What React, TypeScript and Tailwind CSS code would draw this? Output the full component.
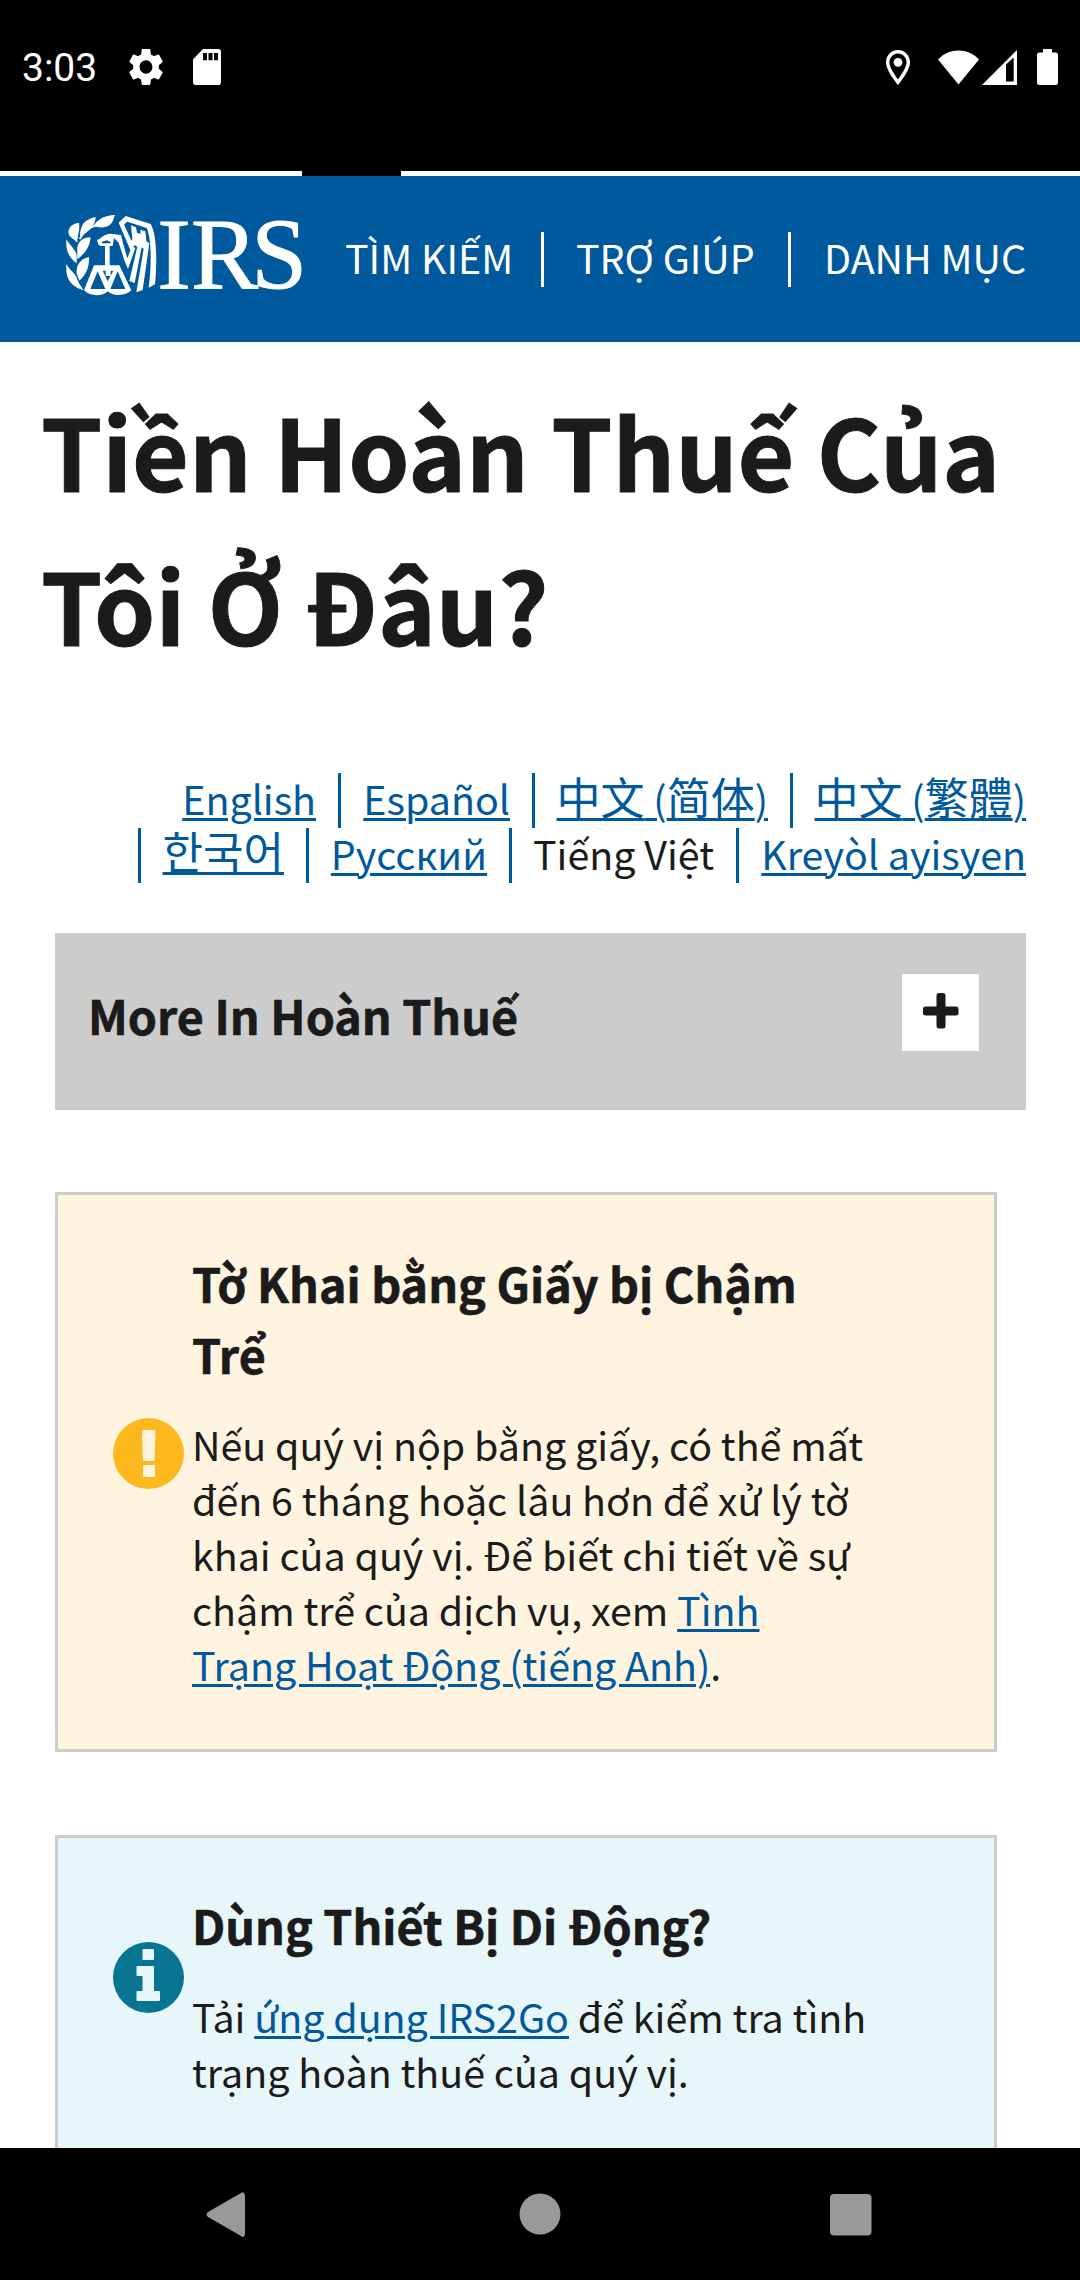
import type { ReactNode } from "react";

const sans = "font-['Noto_Sans_CJK_SC','Noto_Sans',sans-serif]";

function StatusBar() {
  return (
    <div className="flex h-[171px] items-start justify-between bg-black text-white">
      <div className="flex h-[134px] items-center pl-[22px] font-[Roboto,sans-serif] text-[39px] leading-none">
        <span className="w-[107px] pt-[3px]">3:03</span>
        <svg className="h-[36px] w-[34px]" viewBox="2.5 2.4 19 19.2" preserveAspectRatio="none" fill="currentColor">
          <path d="M19.14 12.94c.04-.3.06-.61.06-.94 0-.32-.02-.64-.07-.94l2.03-1.58a.49.49 0 0 0 .12-.61l-1.92-3.32a.488.488 0 0 0-.59-.22l-2.39.96c-.5-.38-1.03-.7-1.62-.94L14.4 2.81a.484.484 0 0 0-.48-.41h-3.84c-.24 0-.43.17-.47.41L9.25 5.35c-.59.24-1.13.57-1.62.94L5.24 5.33a.48.48 0 0 0-.59.22L2.74 8.87c-.12.21-.08.47.12.61l2.03 1.58c-.05.3-.09.63-.09.94s.02.64.07.94l-2.03 1.58a.49.49 0 0 0-.12.61l1.92 3.32c.12.22.37.29.59.22l2.39-.96c.5.38 1.03.7 1.62.94l.36 2.54c.05.24.24.41.48.41h3.84c.24 0 .44-.17.47-.41l.36-2.54c.59-.24 1.13-.56 1.62-.94l2.39.96c.22.08.47 0 .59-.22l1.92-3.32a.48.48 0 0 0-.12-.61l-2.01-1.58zM12 15.6A3.61 3.61 0 0 1 8.4 12c0-1.98 1.62-3.6 3.6-3.6s3.6 1.62 3.6 3.6-1.62 3.600-3.600 3.600z" />
        </svg>
        <svg className="ml-[30px] h-[36px] w-[28px]" viewBox="0 0 28 35" preserveAspectRatio="none" fill="currentColor">
          <path fillRule="evenodd" d="M10 0H25Q28 0 28 3V32Q28 35 25 35H3Q0 35 0 32V10ZM10 4V11H14V4ZM15.500 4V11H19.500V4ZM21 4V11H25V4Z" />
        </svg>
      </div>
      <svg className="mt-[49px] mr-[22px] h-[36px] w-[172px]" viewBox="886 49 172 36" fill="currentColor">
        <path fillRule="evenodd" d="M898 50C891 50 886 55.500 886 62.500C886 71 898 85 898 85S910 71 910 62.500C910 55.500 905 50 898 50ZM898 53.500C903 53.500 906.600 57.500 906.600 62.500C906.600 68 898 79.500 898 79.500S889.400 68 889.400 62.500C889.400 57.500 893 53.500 898 53.500Z" />
        <circle cx="898" cy="62.300" r="4.400" />
        <path d="M938 59.500C949 47.500 968 47.500 979 59.500L958.500 84.500Z" />
        <path fillRule="evenodd" d="M982 85L1017 50V85ZM1006 64.500V81.500H1013.700V57.500Z" />
        <path d="M1043 49H1052V52.500H1055.500Q1058 52.500 1058 55V82.500Q1058 85 1055.500 85H1039.500Q1037 85 1037 82.500V55Q1037 52.500 1039.500 52.500H1043Z" />
      </svg>
    </div>
  );
}

function Logo() {
  return (
    <svg className="h-[130px] w-[300px]" viewBox="0 0 900 390" fill="white">
      {/* laurel branch */}
      <path d="M225 75C195 76 172 88 160 108C180 116 200 112 210 104C219 97 221 85 225 75Z" />
      <path d="M119 147C130 125 145 113 168 106" fill="none" stroke="white" strokeWidth="6" />
      <path d="M167 81C140 86 120 100 120 138C150 124 166 105 167 81Z" />
      <path d="M117 98C95 100 83 115 86 132C90 142 100 146 112 158C112 135 121 120 117 98Z" />
      <path d="M152 142C128 142 115 155 112 172L112 208C135 190 150 170 152 142Z" />
      <path d="M79 148C78 178 80 196 110 220C110 200 112 190 104 182C98 170 85 160 79 148Z" />
      <path d="M147 201C120 208 108 225 110 250L118 272C140 252 148 230 147 201Z" />
      <path d="M79 222C77 260 85 285 130 301C122 285 112 275 110 262C100 245 85 235 79 222Z" />
      {/* eagle head and neck */}
      <path fillRule="evenodd" d="M171 150C184 146 190 132 212 131L243 135L249 160L262 205L276 168L286 174L264 237L254 214L236 158L222 144L218 168H184L176 165ZM186 155L200 151L212 156V160H186Z" />
      {/* scales */}
      <path fillRule="evenodd" d="M195 166H209V226H238L274 301C258 318 218 320 203 304C188 320 150 320 132 301L162 226H195ZM173 244L151 297H196ZM233 244L211 297H256ZM188 242L203 274L220 242H212V258H197V242Z" />
      {/* wing */}
      <path d="M236 98L257 78L332 102C350 130 352 215 345 283L326 293C334 235 336 150 320 114L262 95L252 103L280 166L272 182Z" />
      <path d="M273 106L288 112L291 128L302 132L301 119L316 124L319 154L328 160L308 300L289 307L311 176L305 172L284 279L268 273L292 170L284 166L278 172L268 160L277 148Z" />
      <text className="font-['Liberation_Serif',serif] text-[302px]" x="352 453 634" y="296" stroke="white" strokeWidth="3">IRS</text>
    </svg>
  );
}

function Header() {
  return (
    <header className="flex h-[166px] bg-[#00599c] text-[39.4px] leading-[49px] text-white">
      <div className="mt-[14px] ml-[40px] w-[300px] shrink-0">
        <Logo />
      </div>
      <nav className="mt-[56px] flex h-[55px] whitespace-nowrap">
        <span className="w-[201px] pl-[5px]">TÌM KIẾM</span>
        <span className="w-[247px] border-l-3 border-white pl-[32px]">TRỢ GIÚP</span>
        <span className="border-l-3 border-white pl-[33px]">DANH MỤC</span>
      </nav>
    </header>
  );
}

const linkStyle =
  "text-[#00599c] underline decoration-[3px] underline-offset-[3px]";

function Lang({ width, children, first }: { width: string; children: ReactNode; first?: boolean }) {
  return (
    <li className={`flex h-[55px] shrink-0 ${width} ${first ? "" : "border-l-3 border-[#00599c]"} justify-end`}>
      {children}
    </li>
  );
}

function Languages() {
  return (
    <div className="h-[110px] pr-[54px] text-[39.4px] leading-[49px] whitespace-nowrap">
      <ul className="flex justify-end">
        <Lang first width="w-[156px] pr-[22px]"><a className={linkStyle}>English</a></Lang>
        <Lang width="w-[194px] pr-[22px]"><a className={linkStyle}>Español</a></Lang>
        <Lang width="w-[258px] pr-[22px]"><a className={linkStyle}><span className="text-[44px] leading-[44px]">中文</span> (<span className="text-[44px] leading-[44px]">简体</span>)</a></Lang>
        <Lang width="w-[236px]"><a className={linkStyle}><span className="text-[44px] leading-[44px]">中文</span> (<span className="font-['Noto_Sans_CJK_TC',sans-serif] text-[44px] leading-[44px]">繁體</span>)</a></Lang>
      </ul>
      <ul className="flex justify-end">
        <Lang width="w-[168px] pr-[22px]"><a className={`${linkStyle} font-['Noto_Sans_CJK_KR',sans-serif] text-[44px] leading-[45px]`}>한국어</a></Lang>
        <Lang width="w-[203px] pr-[22px]"><a className={linkStyle}>Русский</a></Lang>
        <Lang width="w-[227px] pr-[22px]"><span>Tiếng Việt</span></Lang>
        <Lang width="w-[290px]"><a className={linkStyle}>Kreyòl ayisyen</a></Lang>
      </ul>
    </div>
  );
}

function NavBar() {
  return (
    <div className="flex h-[132px] shrink-0 bg-black">
      <svg className="h-[132px] w-full" viewBox="0 0 1080 132" fill="#999">
        <path d="M245 47V86Q244 91 241 88L208 69Q205 66.500 208 64L241 45Q244 43 245 47Z" />
        <circle cx="540" cy="66" r="20.500" />
        <rect x="830" y="46" width="41.500" height="41.500" rx="4" />
      </svg>
    </div>
  );
}

export default function App() {
  return (
    <div className={`flex h-[2280px] w-[1080px] flex-col overflow-hidden bg-white text-[#1b1b1b] ${sans}`}>
      <StatusBar />
      <div className="flex h-[5px] bg-white pl-[302px]">
        <div className="w-[99px] bg-black" />
      </div>
      <Header />
      <main className="h-[1806px] overflow-hidden">
        <h1 className="mt-[30px] h-[308px] pl-[41px] text-[98px] leading-[154px] font-bold whitespace-nowrap [-webkit-text-stroke:1px_#1b1b1b]">
          Tiền Hoàn Thuế Của
          <br />
          Tôi Ở Đâu?
        </h1>
        <div className="mt-[93px]">
          <Languages />
        </div>
        <div className="mt-[50px] ml-[55px] flex h-[177px] w-[971px] justify-between bg-[#ccc] pt-[41px] pr-[47px] pl-[33px]">
          <span className="mt-[5px] text-[46.65px] leading-[71px] font-bold [-webkit-text-stroke:0.6px_#1b1b1b]">More In Hoàn Thuế</span>
          <button className="flex h-[77px] w-[77px] justify-center bg-white pt-[19px]">
            <svg className="h-[36px] w-[36px]" viewBox="0 0 36 36" fill="#1b1b1b">
              <path d="M16 0H20Q22.500 0 22.500 2.500V13.500H33Q35.500 13.500 35.500 16V20Q35.500 22.500 33 22.500H22.500V33Q22.500 35.500 20 35.500H16Q13.500 35.500 13.500 33V22.500H2.500Q0 22.500 0 20V16Q0 13.500 2.500 13.500H13.500V2.500Q13.500 0 16 0Z" />
            </svg>
          </button>
        </div>

        <section className="mt-[82px] ml-[55px] flex h-[560px] w-[942px] border-3 border-[#ccc] bg-[#fff4df]">
          <svg className="mt-[223px] ml-[55px] h-[71px] w-[71px] shrink-0" viewBox="0 0 71 71">
            <circle cx="35.500" cy="35.500" r="35.500" fill="#fdb81e" />
            <path d="M30 12H41.500Q42.500 12 42.500 13L41.500 42Q41.500 43 40.500 43H31Q30 43 30 42L29 13Q29 12 30 12ZM31 47H41Q42 47 42 48V58Q42 59 41 59H31Q30 59 30 58V48Q30 47 31 47Z" fill="#fff4df" />
          </svg>
          <div className="ml-[8px] whitespace-nowrap">
            <h3 className="mt-[52px] text-[46.65px] leading-[71px] font-bold [-webkit-text-stroke:0.6px_#1b1b1b]">Tờ Khai bằng Giấy bị Chậm<br />Trể</h3>
            <p className="mt-[27px] text-[39.4px] leading-[55px]">
              Nếu quý vị nộp bằng giấy, có thể mất<br />
              đến 6 tháng hoặc lâu hơn để xử lý tờ<br />
              khai của quý vị. Để biết chi tiết về sự<br />
              chậm trể của dịch vụ, xem <a className={linkStyle}>Tình<br />Trạng Hoạt Động (tiếng Anh)</a>.
            </p>
          </div>
        </section>

        <section className="mt-[83px] ml-[55px] flex h-[400px] w-[942px] border-3 border-[#ccc] bg-[#e7f6f9]">
          <svg className="mt-[104px] ml-[55px] h-[71px] w-[71px] shrink-0" viewBox="0 0 71 71">
            <circle cx="35.500" cy="35.500" r="35.500" fill="#087592" />
            <path d="M30.500 7H40Q41 7 41 8V17Q41 18 40 18H30.500Q29.500 18 29.500 17V8Q29.500 7 30.500 7ZM24.500 24H40Q41 24 41 25V49H46Q47 49 47 50V58Q47 59 46 59H24.500Q23.500 59 23.500 58V50Q23.500 49 24.500 49H29.500V34H24.500Q23.500 34 23.500 33V25Q23.500 24 24.500 24Z" fill="#e7f6f9" />
          </svg>
          <div className="ml-[8px] whitespace-nowrap">
            <h3 className="mt-[51px] text-[46.65px] leading-[71px] font-bold [-webkit-text-stroke:0.6px_#1b1b1b]">Dùng Thiết Bị Di Động?</h3>
            <p className="mt-[28px] text-[39.4px] leading-[55px]">
              Tải <a className={linkStyle}>ứng dụng IRS2Go</a> để kiểm tra tình<br />
              trạng hoàn thuế của quý vị.
            </p>
          </div>
        </section>
      </main>
      <NavBar />
    </div>
  );
}
